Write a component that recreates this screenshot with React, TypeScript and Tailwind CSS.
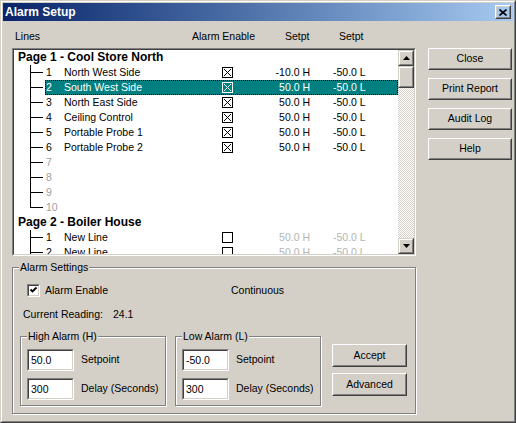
import React from 'react'

type Line = {
  n: string
  name?: string
  on?: boolean
  box?: boolean
  hi?: string
  lo?: string
  dim?: boolean
  dimVals?: boolean
  sel?: boolean
  last?: boolean
}

const page1: Line[] = [
  { n: '1', name: 'North West Side', box: true, on: true, hi: '-10.0 H', lo: '-50.0 L' },
  { n: '2', name: 'South West Side', box: true, on: true, hi: '50.0 H', lo: '-50.0 L', sel: true },
  { n: '3', name: 'North East Side', box: true, on: true, hi: '50.0 H', lo: '-50.0 L' },
  { n: '4', name: 'Ceiling Control', box: true, on: true, hi: '50.0 H', lo: '-50.0 L' },
  { n: '5', name: 'Portable Probe 1', box: true, on: true, hi: '50.0 H', lo: '-50.0 L' },
  { n: '6', name: 'Portable Probe 2', box: true, on: true, hi: '50.0 H', lo: '-50.0 L' },
  { n: '7', dim: true },
  { n: '8', dim: true },
  { n: '9', dim: true },
  { n: '10', dim: true, last: true },
]

const page2: Line[] = [
  { n: '1', name: 'New Line', box: true, hi: '50.0 H', lo: '-50.0 L', dimVals: true },
  { n: '2', name: 'New Line', box: true, hi: '50.0 H', lo: '-50.0 L', dimVals: true },
]

function Raised({ className = '', children }: { className?: string; children?: React.ReactNode }) {
  return (
    <div className={`border border-t-white border-l-white border-r-[#404040] border-b-[#404040] ${className}`}>
      <div className="h-full border border-t-[#d4d0c8] border-l-[#d4d0c8] border-r-[#808080] border-b-[#808080] flex items-center justify-center">
        {children}
      </div>
    </div>
  )
}

function ScrollBtn({ className = '', children }: { className?: string; children?: React.ReactNode }) {
  return (
    <div className={`border border-t-[#d4d0c8] border-l-[#d4d0c8] border-r-[#404040] border-b-[#404040] ${className}`}>
      <div className="h-full border border-t-white border-l-white border-r-[#808080] border-b-[#808080] bg-[#d4d0c8] flex items-center justify-center">
        {children}
      </div>
    </div>
  )
}

function Sunken({ className = '', children }: { className?: string; children?: React.ReactNode }) {
  return (
    <div className={`border border-t-[#808080] border-l-[#808080] border-r-white border-b-white ${className}`}>
      <div className="h-full border border-t-[#404040] border-l-[#404040] border-r-[#d4d0c8] border-b-[#d4d0c8] bg-white">
        {children}
      </div>
    </div>
  )
}

function Box({ on, white }: { on?: boolean; white?: boolean }) {
  const c = white ? '#ffffff' : '#000000'
  return (
    <svg width="11" height="11" viewBox="0 0 11 11" className="shrink-0" shapeRendering="crispEdges">
      <rect x="0.5" y="0.5" width="10" height="10" fill="none" stroke={c} />
      {on && <path d="M2 2L9 9M9 2L2 9" stroke={c} strokeWidth="1" shapeRendering="auto" />}
    </svg>
  )
}

function Branch({ last }: { last?: boolean }) {
  return (
    <div className="flex flex-col w-[15px] h-[15px] shrink-0 ml-[16px]">
      <div className="h-[7px] border-l border-black" />
      <div className="h-px w-[13px] bg-black" />
      <div className={`h-[7px] ${last ? '' : 'border-l border-black'}`} />
    </div>
  )
}

function Row({ line }: { line: Line }) {
  const sel = line.sel
  return (
    <div className="flex h-[15px] items-stretch">
      <Branch last={line.last} />
      <div
        className={`flex-1 flex items-center leading-[13px] ${
          sel ? 'bg-[#008080] text-white outline outline-dotted outline-1 -outline-offset-1 outline-black' : ''
        }`}
      >
        <span className={`w-[19px] pl-px shrink-0 ${line.dim ? 'text-[#a0a0a0]' : ''}`}>{line.n}</span>
        <span className="w-[158px] shrink-0 whitespace-nowrap">{line.name}</span>
        <span className="w-[11px] shrink-0 flex">{line.box && <Box on={line.on} white={sel} />}</span>
        <span className={`w-[77px] text-right shrink-0 ${line.dimVals ? 'text-[#b4b4b4]' : ''}`}>{line.hi}</span>
        <span className={`pl-[23px] shrink-0 ${line.dimVals ? 'text-[#b4b4b4]' : ''}`}>{line.lo}</span>
      </div>
    </div>
  )
}

function Group({ label, className = '', children }: { label: string; className?: string; children?: React.ReactNode }) {
  return (
    <div className={`relative border border-[#808080] shadow-[inset_1px_1px_0_#ffffff,1px_1px_0_#ffffff] ${className}`}>
      <span className="absolute left-[6px] -top-[8px] px-px bg-[#d4d0c8] leading-[14px] whitespace-nowrap">{label}</span>
      {children}
    </div>
  )
}

function Field({ value, label, className = '' }: { value: string; label: string; className?: string }) {
  return (
    <div className={`flex items-center h-[22px] ${className}`}>
      <Sunken className="w-[47px] h-[22px] shrink-0">
        <div className="h-full flex items-center pl-[2px] leading-[14px]">{value}</div>
      </Sunken>
      <span className="ml-[7px] whitespace-nowrap">{label}</span>
    </div>
  )
}

export default function App() {
  return (
    <div className="w-[516px] h-[423px] border border-t-[#d4d0c8] border-l-[#d4d0c8] border-r-[#404040] border-b-[#404040] bg-[#d4d0c8] font-['Liberation_Sans',Arial,sans-serif] text-[10.5px] text-black select-none">
      <div className="h-full border border-t-white border-l-white border-r-[#808080] border-b-[#808080] p-px flex flex-col">
        {/* Title bar */}
        <div className="h-[18px] shrink-0 flex items-center bg-linear-to-r from-[#0a246a] to-[#a6caf0] pl-[2px] pr-[2px]">
          <span className="flex-1 text-white font-bold text-[12px] leading-[16px]">Alarm Setup</span>
          <Raised className="w-[16px] h-[14px]">
            <svg width="8" height="7" viewBox="0 0 8 7">
              <path d="M0.5 0.5L7.5 6.5M7.5 0.5L0.5 6.5" stroke="#000" strokeWidth="1.6" />
            </svg>
          </Raised>
        </div>

        {/* Body */}
        <div className="flex-1 flex pl-[9px]">
          <div className="w-[404px] shrink-0 pt-[8px] flex flex-col">
            <div className="h-[14px] leading-[14px] flex">
              <span className="w-[180px] pl-[3px]">Lines</span>
              <span className="w-[93px]">Alarm Enable</span>
              <span className="w-[54px]">Setpt</span>
              <span>Setpt</span>
            </div>

            <Sunken className="mt-[5px] h-[208px] w-[404px]">
              <div className="h-full flex">
                <div className="flex-1 overflow-hidden">
                  <div className="h-[15px] leading-[15px] pl-[4px] font-bold text-[12px]">Page 1 - Cool Store North</div>
                  {page1.map((l) => (
                    <Row key={'a' + l.n} line={l} />
                  ))}
                  <div className="h-[15px] leading-[15px] pl-[4px] font-bold text-[12px]">Page 2 - Boiler House</div>
                  {page2.map((l) => (
                    <Row key={'b' + l.n} line={l} />
                  ))}
                </div>
                <div className="w-[16px] shrink-0 flex flex-col">
                  <ScrollBtn className="h-[16px]">
                    <svg width="7" height="4" viewBox="0 0 7 4">
                      <path d="M3.5 0L7 4H0Z" fill="#000" />
                    </svg>
                  </ScrollBtn>
                  <ScrollBtn className="h-[22px]" />
                  <div className="flex-1 bg-[image:repeating-conic-gradient(#ffffff_0%_25%,#d4d0c8_0%_50%)] bg-[length:2px_2px]" />
                  <ScrollBtn className="h-[16px]">
                    <svg width="7" height="4" viewBox="0 0 7 4">
                      <path d="M0 0H7L3.5 4Z" fill="#000" />
                    </svg>
                  </ScrollBtn>
                </div>
              </div>
            </Sunken>

            <Group label="Alarm Settings" className="mt-[11px] h-[147px]">
              <div className="pt-[16px]">
                <div className="h-[13px] flex items-center pl-[14px]">
                  <div className="w-[204px] flex items-center">
                    <Sunken className="w-[13px] h-[13px]">
                      <svg width="9" height="9" viewBox="0 0 9 9" className="block">
                        <path d="M1.5 3.5L3.5 5.5L7.5 1.5" fill="none" stroke="#000" strokeWidth="1.8" />
                      </svg>
                    </Sunken>
                    <span className="ml-[5px]">Alarm Enable</span>
                  </div>
                  <span>Continuous</span>
                </div>
                <div className="mt-[10px] h-[14px] leading-[14px] pl-[10px] flex">
                  <span className="w-[90px]">Current Reading:</span>
                  <span>24.1</span>
                </div>
                <div className="mt-[15px] flex pl-[7px]">
                  <Group label="High Alarm (H)" className="w-[146px] h-[70px]">
                    <div className="pt-[12px] pl-[6px]">
                      <Field value="50.0" label="Setpoint" />
                      <Field value="300" label="Delay (Seconds)" className="mt-[7px]" />
                    </div>
                  </Group>
                  <Group label="Low Alarm (L)" className="w-[146px] h-[70px] ml-[9px]">
                    <div className="pt-[12px] pl-[6px]">
                      <Field value="-50.0" label="Setpoint" />
                      <Field value="300" label="Delay (Seconds)" className="mt-[7px]" />
                    </div>
                  </Group>
                  <div className="ml-[11px] pt-[8px] flex flex-col gap-[6px]">
                    <Raised className="w-[75px] h-[23px]">Accept</Raised>
                    <Raised className="w-[75px] h-[23px]">Advanced</Raised>
                  </div>
                </div>
              </div>
            </Group>
          </div>

          <div className="ml-[12px] w-[84px] pt-[27px] flex flex-col gap-[8px]">
            <Raised className="h-[22px]">Close</Raised>
            <Raised className="h-[22px]">Print Report</Raised>
            <Raised className="h-[22px]">Audit Log</Raised>
            <Raised className="h-[22px]">Help</Raised>
          </div>
        </div>
      </div>
    </div>
  )
}
